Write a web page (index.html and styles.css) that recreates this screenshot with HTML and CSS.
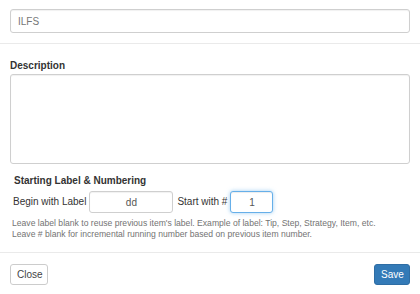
FILE: index.html
```html
<!DOCTYPE html>
<html>
<head>
<meta charset="utf-8">
<link rel="stylesheet" href="styles.css">
</head>
<body>
<div class="modal">
  <div class="modal-header">
    <input class="form-control title-input" type="text" value="ILFS">
  </div>
  <div class="modal-body">
    <label class="field-label">Description</label>
    <textarea class="form-control desc"></textarea>
    <div class="numbering">
      <div class="numbering-title">Starting Label &amp; Numbering</div>
      <div class="numbering-row">
        <span class="row-label">Begin with Label</span>
        <input class="form-control small-input label-input" type="text" value="dd">
        <span class="row-label">Start with #</span>
        <input class="form-control small-input num-input focused" type="text" value="1">
      </div>
      <div class="help">Leave label blank to reuse previous item's label. Example of label: Tip, Step, Strategy, Item, etc.<br>Leave # blank for incremental running number based on previous item number.</div>
    </div>
  </div>
  <div class="modal-footer">
    <button class="btn btn-default">Close</button>
    <button class="btn btn-primary">Save</button>
  </div>
</div>
</body>
</html>
```
FILE: styles.css
```css
html, body {
  margin: 0;
  padding: 0;
  background: #fff;
}
body {
  font-family: "Liberation Sans", Arial, sans-serif;
  font-size: 10px;
  color: #333;
  line-height: 14px;
}
.modal {
  width: 420px;
}
.modal-header {
  padding: 9px 10px 10px;
  border-bottom: 1px solid #eaeaea;
}
.form-control {
  display: block;
  box-sizing: border-box;
  width: 100%;
  border: 1px solid #cfcfcf;
  border-radius: 3px;
  background: #fff;
  font-family: "Liberation Sans", Arial, sans-serif;
  font-size: 10px;
  color: #555;
  margin: 0;
  outline: none;
  box-shadow: inset 0 1px 1px rgba(0,0,0,0.06);
}
.title-input {
  height: 24px;
  padding: 0 7px;
  color: #777;
}
.modal-body {
  padding: 15px 10px 0;
}
.field-label {
  display: block;
  font-weight: bold;
  margin-bottom: 1px;
}
.desc {
  height: 90px;
  resize: none;
  padding: 4px 7px;
}
.numbering {
  padding: 10px 0 0 2px;
}
.numbering-title {
  font-weight: bold;
  padding-left: 2px;
}
.numbering-row {
  display: flex;
  align-items: center;
  margin-top: 3px;
  padding-left: 1px;
}
.small-input {
  height: 22px;
  text-align: center;
  padding: 0 4px;
}
.label-input {
  width: 84px;
  margin: 0 4px 0 3px;
}
.num-input {
  width: 43px;
  margin-left: 3px;
}
.focused {
  border-color: #66afe9;
  box-shadow: inset 0 1px 1px rgba(0,0,0,0.075), 0 0 4px rgba(102,175,233,0.6);
}
.help {
  margin-top: 5px;
  font-size: 8.6px;
  line-height: 11px;
  color: #737373;
}
.modal-footer {
  margin-top: 12px;
  border-top: 1px solid #eaeaea;
  padding: 11px 10px 9px;
  display: flex;
  justify-content: space-between;
}
.btn {
  font-family: "Liberation Sans", Arial, sans-serif;
  font-size: 10px;
  height: 21px;
  padding: 0 6px;
  border-radius: 3px;
  border: 1px solid #ccc;
  line-height: 19px;
  cursor: pointer;
}
.btn-default {
  background: #fff;
  color: #444;
  width: 38px;
}
.btn-primary {
  background: #337ab7;
  border-color: #2e6da4;
  color: #fff;
  width: 36px;
}
```
